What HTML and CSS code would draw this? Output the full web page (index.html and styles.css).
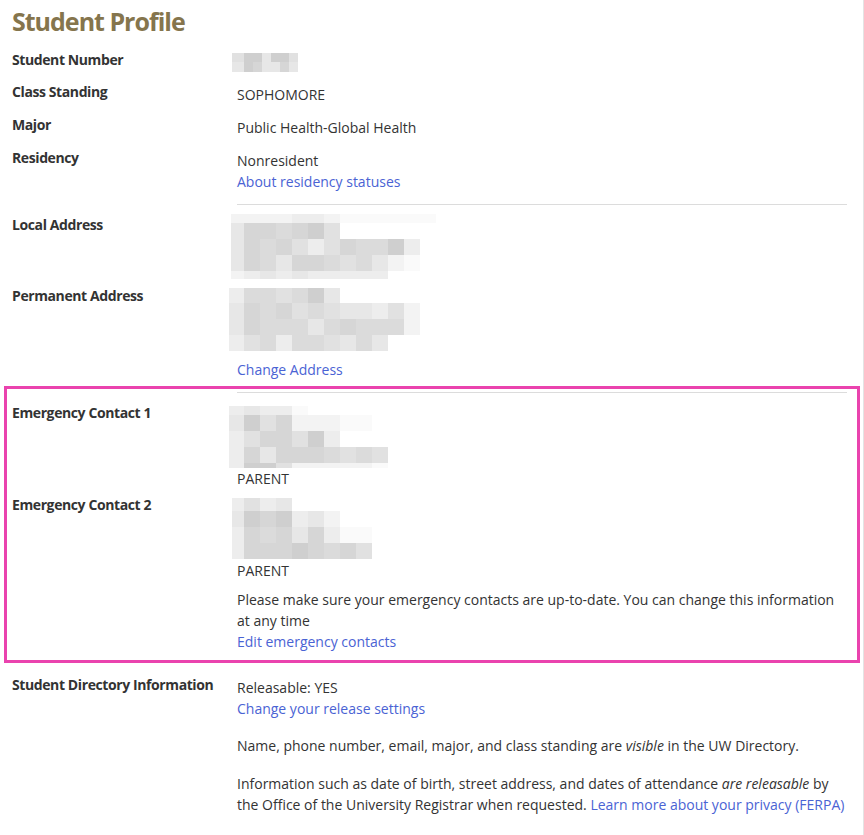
FILE: index.html
```html
<!DOCTYPE html>
<html lang="en">
<head>
<meta charset="utf-8">
<title>Student Profile</title>
<link rel="stylesheet" href="styles.css">
</head>
<body>
<div class="page">
  <h1 class="title">Student Profile</h1>

  <div class="row">
    <div class="label">Student Number</div>
    <div class="value">
      <div class="mz mz-sn">
        <div class="mr h9"><i class="k5"></i><i class="k8"></i><i class="k8"></i><i class="k4"></i><i class="k8"></i><i class="k8"></i><i class="k5"></i></div>
        <div class="mr h10"><i class="k4"></i><i class="k8"></i><i class="k7"></i><i class="k4"></i><i class="k4"></i><i class="k7"></i><i class="k4"></i></div>
      </div>
    </div>
  </div>
  <div class="row">
    <div class="label">Class Standing</div>
    <div class="value">SOPHOMORE</div>
  </div>
  <div class="row">
    <div class="label">Major</div>
    <div class="value">Public Health-Global Health</div>
  </div>
  <div class="row">
    <div class="label">Residency</div>
    <div class="value">Nonresident<br><a class="link" href="#">About residency statuses</a></div>
  </div>

  <div class="rule"></div>

  <div class="row row-tight">
    <div class="label">Local Address</div>
    <div class="value">
      <div class="addr">
        <div class="mz mz-local">
          <div class="mr h9"><i class="k2"></i><i class="k2"></i><i class="k2"></i><i class="k2"></i><i class="k3"></i><i class="k3"></i><i class="k2"></i><i class="k1"></i><i class="k1"></i><i class="k1"></i><i class="k1"></i><i class="k1"></i><i class="k1"></i></div>
          <div class="mr"><i class="k4"></i><i class="k7"></i><i class="k7"></i><i class="k6"></i><i class="k7"></i><i class="k8"></i><i class="k5"></i></div>
          <div class="mr"><i class="k4"></i><i class="k7"></i><i class="k6"></i><i class="k7"></i><i class="k5"></i><i class="k3"></i><i class="k5"></i><i class="k7"></i><i class="k6"></i><i class="k6"></i><i class="k8"></i><i class="k3"></i></div>
          <div class="mr"><i class="k4"></i><i class="k7"></i><i class="k6"></i><i class="k4"></i><i class="k7"></i><i class="k7"></i><i class="k6"></i><i class="k5"></i><i class="k6"></i><i class="k4"></i><i class="k2"></i><i class="k1"></i></div>
          <div class="mr h8"><i class="k2"></i><i class="k3"></i><i class="k4"></i><i class="k3"></i><i class="k4"></i><i class="k3"></i><i class="k3"></i><i class="k3"></i><i class="k3"></i><i class="k3"></i></div>
        </div>
      </div>
    </div>
  </div>
  <div class="row row-perm">
    <div class="label">Permanent Address</div>
    <div class="value">
      <div class="addr">
        <div class="mz mz-perm">
          <div class="mr h15"><i class="k3"></i><i class="k6"></i><i class="k6"></i><i class="k5"></i><i class="k6"></i><i class="k8"></i><i class="k4"></i></div>
          <div class="mr"><i class="k4"></i><i class="k7"></i><i class="k6"></i><i class="k7"></i><i class="k5"></i><i class="k6"></i><i class="k5"></i><i class="k4"></i><i class="k4"></i><i class="k3"></i><i class="k5"></i><i class="k2"></i></div>
          <div class="mr"><i class="k4"></i><i class="k7"></i><i class="k6"></i><i class="k6"></i><i class="k6"></i><i class="k4"></i><i class="k6"></i><i class="k7"></i><i class="k6"></i><i class="k6"></i><i class="k6"></i><i class="k2"></i></div>
          <div class="mr"><i class="k3"></i><i class="k5"></i><i class="k6"></i><i class="k3"></i><i class="k6"></i><i class="k6"></i><i class="k5"></i><i class="k4"></i><i class="k6"></i><i class="k4"></i></div>
        </div>
      </div>
      <a class="link block-link" href="#">Change Address</a>
    </div>
  </div>

  <section class="highlight">
    <div class="rule rule-in"></div>
    <div class="row row-tight">
      <div class="label">Emergency Contact 1</div>
      <div class="value">
        <div class="addr">
          <div class="mz mz-ec1">
            <div class="mr h9"><i class="k3"></i><i class="k4"></i><i class="k3"></i><i class="k3"></i><i class="k1"></i></div>
            <div class="mr"><i class="k4"></i><i class="k8"></i><i class="k5"></i><i class="k7"></i><i class="k2"></i><i class="k2"></i><i class="k2"></i><i class="k1"></i><i class="k1"></i></div>
            <div class="mr"><i class="k3"></i><i class="k5"></i><i class="k7"></i><i class="k7"></i><i class="k5"></i><i class="k8"></i><i class="k3"></i></div>
            <div class="mr"><i class="k3"></i><i class="k7"></i><i class="k4"></i><i class="k7"></i><i class="k7"></i><i class="k7"></i><i class="k6"></i><i class="k5"></i><i class="k6"></i><i class="k5"></i></div>
            <div class="mr h5"><i class="k3"></i><i class="k8"></i><i class="k8"></i><i class="k5"></i><i class="k2"></i><i class="k2"></i><i class="k2"></i><i class="k2"></i><i class="k2"></i><i class="k1"></i></div>
          </div>
        </div>
        <div>PARENT</div>
      </div>
    </div>
    <div class="row row-tight">
      <div class="label">Emergency Contact 2</div>
      <div class="value">
        <div class="addr">
          <div class="mz mz-ec2">
            <div class="mr h13"><i class="k3"></i><i class="k5"></i><i class="k3"></i><i class="k4"></i></div>
            <div class="mr"><i class="k4"></i><i class="k8"></i><i class="k7"></i><i class="k8"></i><i class="k3"></i><i class="k4"></i><i class="k2"></i></div>
            <div class="mr"><i class="k3"></i><i class="k7"></i><i class="k6"></i><i class="k7"></i><i class="k4"></i><i class="k7"></i><i class="k3"></i><i class="k1"></i><i class="k1"></i></div>
            <div class="mr"><i class="k3"></i><i class="k7"></i><i class="k7"></i><i class="k7"></i><i class="k8"></i><i class="k7"></i><i class="k6"></i><i class="k7"></i><i class="k5"></i></div>
          </div>
        </div>
        <div>PARENT</div>
      </div>
    </div>
    <div class="row row-last">
      <div class="label"></div>
      <div class="value">
        Please make sure your emergency contacts are up-to-date. You can change this information at any time<br>
        <a class="link" href="#">Edit emergency contacts</a>
      </div>
    </div>
  </section>

  <div class="row row-dir">
    <div class="label">Student Directory Information</div>
    <div class="value">
      Releasable: YES<br>
      <a class="link" href="#">Change your release settings</a>
      <p class="para">Name, phone number, email, major, and class standing are <em>visible</em> in the UW Directory.</p>
      <p class="para para-2">Information such as date of birth, street address, and dates of attendance <em>are releasable</em> by the Office of the University Registrar when requested. <a class="link" href="#">Learn more about your privacy (FERPA)</a></p>
    </div>
  </div>
</div>
</body>
</html>
```

FILE: styles.css
```css
* { box-sizing: border-box; }

html, body {
  margin: 0;
  padding: 0;
  background: #fff;
}

body {
  font-family: "Open Sans", "DejaVu Sans", sans-serif;
  font-size: 14px;
  line-height: 21px;
  color: #333;
}

.page {
  width: 864px;
  min-height: 835px;
  padding: 6px 16px 0 12px;
  border-right: 1px solid #e4e4e4;
}

.title {
  margin: 0 0 16px;
  font-family: "Open Sans", sans-serif;
  font-weight: 700;
  font-size: 25px;
  line-height: 30px;
  letter-spacing: -1px;
  color: #85754d;
}

.row {
  display: grid;
  grid-template-columns: 225px 1fr;
  margin-bottom: 12px;
}

.row-tight { margin-bottom: 8px; }
.row-perm { margin-bottom: 0; }
.row-last { margin-bottom: 0; }

.label {
  font-weight: 700;
  line-height: 15px;
  letter-spacing: -0.4px;
  color: #333;
}

.value {
  line-height: 21px;
  color: #333;
}

.link {
  color: #4a63d4;
  text-decoration: none;
}

.block-link {
  display: block;
  margin-top: 8px;
}

.rule {
  margin: 0 0 12px 225px;
  border-top: 1px solid #dcdcdc;
}

.highlight {
  margin: 6px -13px 14px -8px;
  padding: 3px 10px 8px 5px;
  border: 3px solid #ea43ae;
}

.rule-in { margin-bottom: 12px; }

.row-dir { margin-bottom: 0; }

.para {
  margin: 16px 0 0;
}

.para-2 { margin-top: 17px; }

em { font-style: italic; }

/* pixelated (redacted) blocks */
.addr {
  display: flow-root;
  height: 63px;
}

.mz { display: flex; flex-direction: column; }
.mr { display: flex; height: 16px; }
.mr i { display: block; width: 16px; height: 100%; }

.h5 { height: 5px; }
.h8 { height: 8px; }
.h9 { height: 9px; }
.h10 { height: 10px; }
.h13 { height: 13px; }
.h15 { height: 15px; }

.mz-sn { margin: 1px 0 0 -5px; }
.mz-sn .mr i { width: 9px; }
.mz-sn .mr i:first-child { width: 12px; }

.mz-local { margin: -3px 0 0 -6px; }
.mz-local .mr i:first-child { width: 13px; }

.mz-perm { margin: 0 0 0 -8px; }
.mz-perm .mr i:first-child { width: 15px; }

.mz-ec1 { margin: 1px 0 0 -8px; }
.mz-ec1 .mr i:first-child { width: 15px; }

.mz-ec2 { margin: 1px 0 0 -5px; }
.mz-ec2 .mr i:first-child { width: 12px; }

.k1 { background: #fafafa; }
.k2 { background: #f3f3f3; }
.k3 { background: #ededed; }
.k4 { background: #e7e7e7; }
.k5 { background: #e1e1e1; }
.k6 { background: #dbdbdb; }
.k7 { background: #d6d6d6; }
.k8 { background: #cfcfcf; }
```
